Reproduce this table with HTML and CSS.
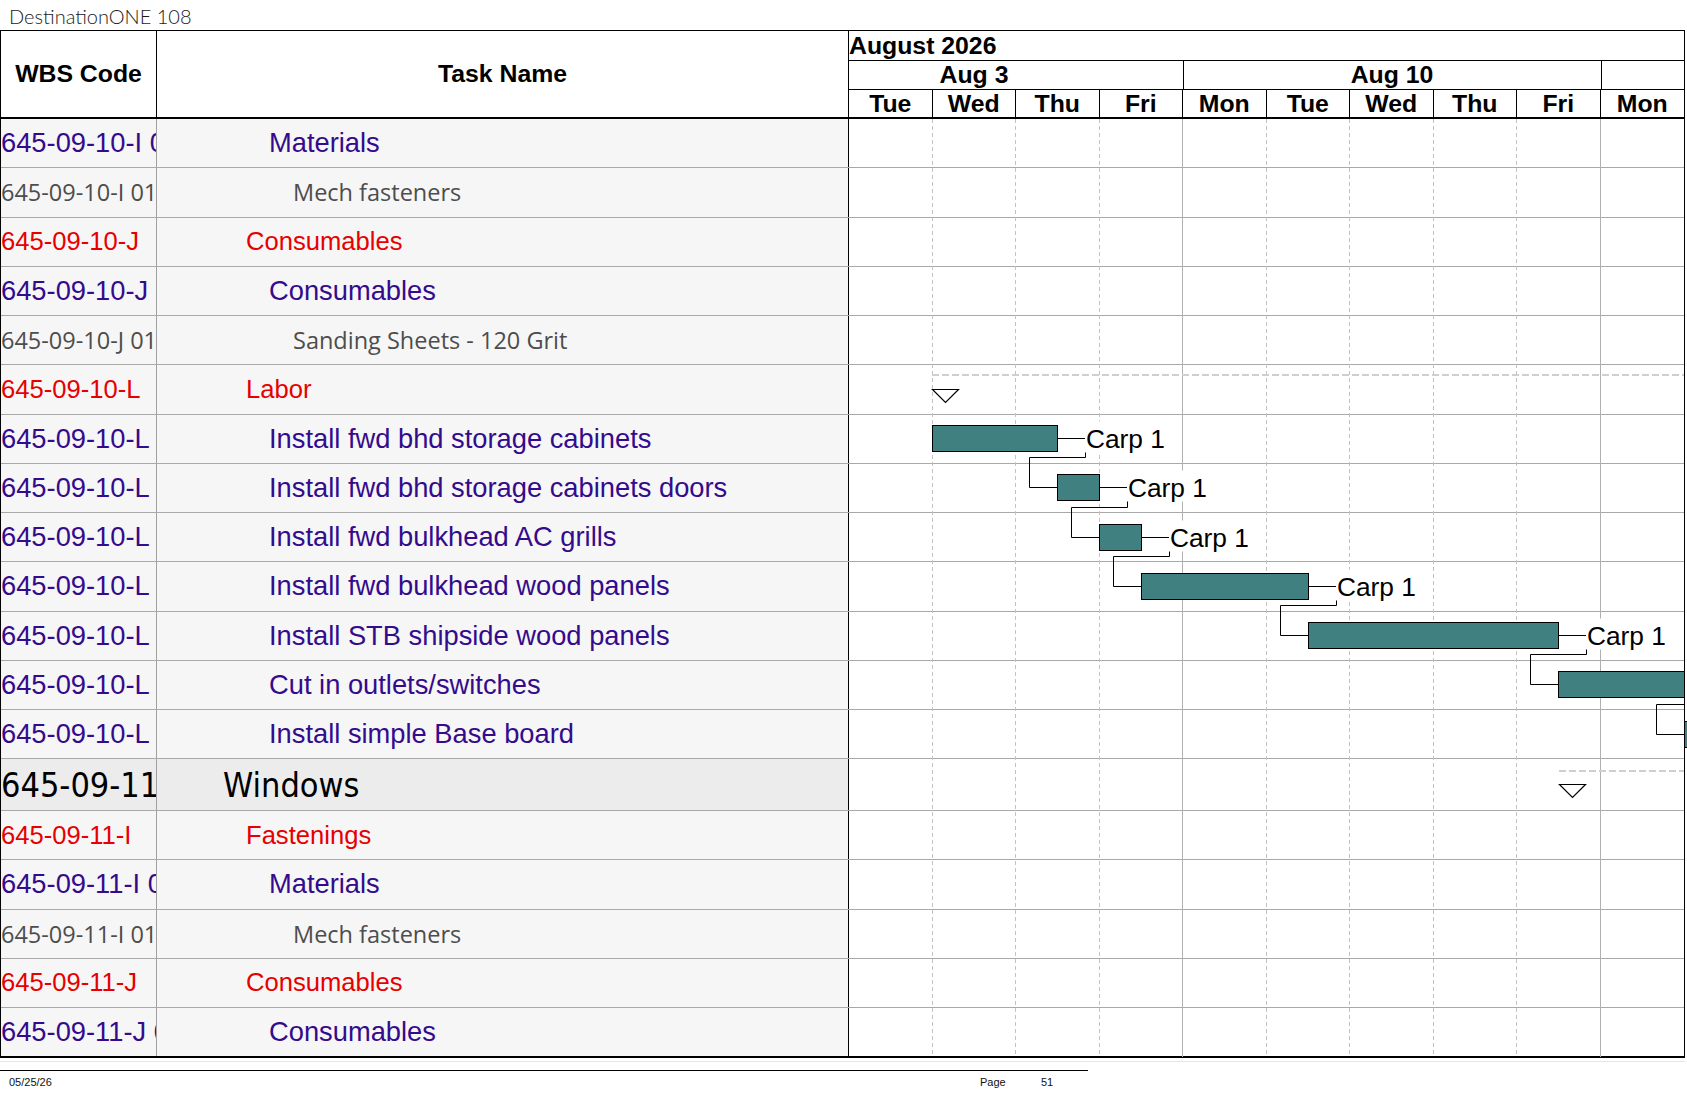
FILE: index.html
```html
<!DOCTYPE html>
<html lang="en">
<head>
<meta charset="utf-8">
<title>DestinationONE 108</title>
<link rel="stylesheet" href="styles.css">
</head>
<body>
<div class="title">DestinationONE 108</div>
<div class="sheet">
  <div class="head">
    <div class="h-wbs">WBS Code</div>
    <div class="h-task">Task Name</div>
    <div class="h-gantt">
      <div class="g-month">August 2026</div>
      <div class="g-weeks">
        <div class="wk wk-first">Aug 3</div>
        <div class="wk">Aug 10</div>
        <div class="wk wk-last"></div>
      </div>
      <div class="g-days">
        <div class="day">Tue</div><div class="day">Wed</div><div class="day">Thu</div><div class="day">Fri</div><div class="day">Mon</div>
        <div class="day">Tue</div><div class="day">Wed</div><div class="day">Thu</div><div class="day">Fri</div><div class="day">Mon</div>
      </div>
    </div>
  </div>
  <div class="body">
    <div class="row"><div class="c-wbs purple">645-09-10-I 01</div><div class="c-task purple l4">Materials</div><div class="c-gantt"></div></div>
    <div class="row"><div class="c-wbs gray">645-09-10-I 01.01</div><div class="c-task gray l5">Mech fasteners</div><div class="c-gantt"></div></div>
    <div class="row"><div class="c-wbs red">645-09-10-J</div><div class="c-task red l3">Consumables</div><div class="c-gantt"></div></div>
    <div class="row"><div class="c-wbs purple">645-09-10-J 01</div><div class="c-task purple l4">Consumables</div><div class="c-gantt"></div></div>
    <div class="row"><div class="c-wbs gray">645-09-10-J 01.01</div><div class="c-task gray l5">Sanding Sheets - 120 Grit</div><div class="c-gantt"></div></div>
    <div class="row"><div class="c-wbs red">645-09-10-L</div><div class="c-task red l3">Labor</div><div class="c-gantt"></div></div>
    <div class="row"><div class="c-wbs purple">645-09-10-L 01</div><div class="c-task purple l4">Install fwd bhd storage cabinets</div><div class="c-gantt"></div></div>
    <div class="row"><div class="c-wbs purple">645-09-10-L 02</div><div class="c-task purple l4">Install fwd bhd storage cabinets doors</div><div class="c-gantt"></div></div>
    <div class="row"><div class="c-wbs purple">645-09-10-L 03</div><div class="c-task purple l4">Install fwd bulkhead AC grills</div><div class="c-gantt"></div></div>
    <div class="row"><div class="c-wbs purple">645-09-10-L 04</div><div class="c-task purple l4">Install fwd bulkhead wood panels</div><div class="c-gantt"></div></div>
    <div class="row"><div class="c-wbs purple">645-09-10-L 05</div><div class="c-task purple l4">Install STB shipside wood panels</div><div class="c-gantt"></div></div>
    <div class="row"><div class="c-wbs purple">645-09-10-L 06</div><div class="c-task purple l4">Cut in outlets/switches</div><div class="c-gantt"></div></div>
    <div class="row"><div class="c-wbs purple">645-09-10-L 07</div><div class="c-task purple l4">Install simple Base board</div><div class="c-gantt"></div></div>
    <div class="row win"><div class="c-wbs big">645-09-11</div><div class="c-task big l2">Windows</div><div class="c-gantt"></div></div>
    <div class="row"><div class="c-wbs red">645-09-11-I</div><div class="c-task red l3">Fastenings</div><div class="c-gantt"></div></div>
    <div class="row"><div class="c-wbs purple">645-09-11-I 01</div><div class="c-task purple l4">Materials</div><div class="c-gantt"></div></div>
    <div class="row"><div class="c-wbs gray">645-09-11-I 01.01</div><div class="c-task gray l5">Mech fasteners</div><div class="c-gantt"></div></div>
    <div class="row"><div class="c-wbs red">645-09-11-J</div><div class="c-task red l3">Consumables</div><div class="c-gantt"></div></div>
    <div class="row last"><div class="c-wbs purple">645-09-11-J 01</div><div class="c-task purple l4">Consumables</div><div class="c-gantt"></div></div>

    <svg class="chart" width="838" height="938" viewBox="0 0 838 938" xmlns="http://www.w3.org/2000/svg">
      <g stroke="#c2c2c2" stroke-width="1" stroke-dasharray="4 3" fill="none">
        <line x1="83.5" y1="0" x2="83.5" y2="938"/>
        <line x1="166.5" y1="0" x2="166.5" y2="938"/>
        <line x1="250.5" y1="0" x2="250.5" y2="938"/>
        <line x1="417.5" y1="0" x2="417.5" y2="938"/>
        <line x1="500.5" y1="0" x2="500.5" y2="938"/>
        <line x1="584.5" y1="0" x2="584.5" y2="938"/>
        <line x1="667.5" y1="0" x2="667.5" y2="938"/>
      </g>
      <g stroke="#b0b0b0" stroke-width="1" fill="none">
        <line x1="333.5" y1="0" x2="333.5" y2="938"/>
        <line x1="751.5" y1="0" x2="751.5" y2="938"/>
      </g>

      <!-- summary: Labor -->
      <line x1="83" y1="256" x2="835" y2="256" stroke="#cfcfcf" stroke-width="2" stroke-dasharray="7 3"/>
      <polygon points="83.5,270.5 109.5,270.5 96.5,283.5" fill="#fff" stroke="#000" stroke-width="1.2"/>
      <!-- summary: Windows -->
      <line x1="710" y1="652" x2="835" y2="652" stroke="#cfcfcf" stroke-width="2" stroke-dasharray="7 3"/>
      <polygon points="710.5,665.5 736.5,665.5 723.5,678.5" fill="#fff" stroke="#000" stroke-width="1.2"/>

      <!-- links -->
      <g stroke="#000" stroke-width="1" fill="none">
        <path d="M208.5 319.5 H236.5 V338.5 H180.5 V368.5 H208.5"/>
        <path d="M250.5 368.5 H278.5 V388.5 H222.5 V418.5 H250.5"/>
        <path d="M292.5 418.5 H320.5 V437.5 H264.5 V467.5 H292.5"/>
        <path d="M459.5 467.5 H487.5 V486.5 H431.5 V516.5 H459.5"/>
        <path d="M709.5 516.5 H737.5 V535.5 H681.5 V565.5 H709.5"/>
        <path d="M835 585.5 H807.5 V615.5 H835.5"/>
      </g>

      <!-- bars -->
      <g fill="#408080" stroke="#000" stroke-width="1">
        <rect x="83.5" y="306.5" width="125" height="26"/>
        <rect x="208.5" y="355.5" width="42" height="26"/>
        <rect x="250.5" y="405.5" width="42" height="26"/>
        <rect x="292.5" y="454.5" width="167" height="26"/>
        <rect x="459.5" y="503.5" width="250" height="26"/>
        <rect x="709.5" y="552.5" width="126" height="26"/>
        <rect x="835.5" y="602.5" width="20" height="26"/>
      </g>

      <!-- resource labels -->
      <g class="labels">
        <rect x="236" y="302.5" width="82" height="31" fill="#fff"/>
        <text x="237" y="328.8">Carp 1</text>
        <rect x="278" y="351.5" width="82" height="31" fill="#fff"/>
        <text x="279" y="377.8">Carp 1</text>
        <rect x="320" y="401.5" width="82" height="31" fill="#fff"/>
        <text x="321" y="427.8">Carp 1</text>
        <rect x="487" y="450.5" width="82" height="31" fill="#fff"/>
        <text x="488" y="476.8">Carp 1</text>
        <rect x="737" y="499.5" width="82" height="31" fill="#fff"/>
        <text x="738" y="525.8">Carp 1</text>
      </g>
    </svg>
  </div>
</div>
<div class="ghost-rule"></div>
<div class="foot-rule"></div>
<div class="foot">
  <span class="foot-date">05/25/26</span>
  <span class="foot-page">Page</span>
  <span class="foot-num">51</span>
</div>
</body>
</html>
```

FILE: styles.css
```css
html, body {
  margin: 0;
  padding: 0;
  overflow: hidden;
  background: #fff;
}

body {
  width: 1687px;
  height: 1097px;
  font-family: "Liberation Sans", Arial, sans-serif;
  color: #000;
}

.title {
  box-sizing: border-box;
  height: 30px;
  padding: 4px 0 0 9px;
  font-family: Lato, "Noto Sans", sans-serif;
  font-weight: 300;
  font-size: 20px;
  line-height: 24px;
  color: #1a1a1a;
  white-space: nowrap;
}

.sheet {
  box-sizing: border-box;
  width: 1685px;
  border-top: 1px solid #000;
  border-left: 1px solid #000;
  border-right: 1px solid #000;
}

/* ---------- header ---------- */
.head {
  box-sizing: border-box;
  display: flex;
  height: 88px;
  border-bottom: 2px solid #000;
  font-weight: bold;
  font-size: 24.8px;
}

.h-wbs,
.h-task {
  display: flex;
  align-items: center;
  justify-content: center;
  border-right: 1px solid #000;
  white-space: nowrap;
}

.h-wbs { flex: 0 0 155px; }
.h-task { flex: 0 0 691px; }

.h-gantt {
  flex: 0 0 835px;
  display: flex;
  flex-direction: column;
  overflow: hidden;
}

.g-month {
  box-sizing: border-box;
  height: 30px;
  line-height: 29px;
  border-bottom: 1px solid #000;
  white-space: nowrap;
}

.g-weeks {
  box-sizing: border-box;
  display: flex;
  height: 29px;
  border-bottom: 1px solid #000;
}

.wk {
  box-sizing: border-box;
  flex: 0 0 418px;
  border-right: 1px solid #000;
  text-align: center;
  line-height: 28px;
  white-space: nowrap;
}

.wk-first { margin-left: -83.5px; }
.wk-last { flex: 1 0 0; border-right: none; }

.g-days {
  display: flex;
  height: 27px;
}

.day {
  box-sizing: border-box;
  flex: 0 0 83.5px;
  border-right: 1px solid #000;
  text-align: center;
  line-height: 27px;
}

.day:last-child { border-right: none; }

/* ---------- body rows ---------- */
.body {
  position: relative;
}

.row {
  box-sizing: border-box;
  display: grid;
  grid-template-columns: 156px 692px 835px;
  height: 49.25px;
  border-bottom: 1px solid #a9a9a9;
}

.row.win { height: 51.75px; }

.row.last {
  height: 50.25px;
  border-bottom: 2px solid #000;
}

.c-wbs,
.c-task {
  display: flex;
  align-items: center;
  overflow: hidden;
  white-space: nowrap;
  background: #f6f6f6;
}

.row.win .c-wbs,
.row.win .c-task { background: #ececec; }

.c-wbs { border-right: 1px solid #a0a0a0; }
.c-task { border-right: 1px solid #000; }
.c-gantt { background: #fff; }

.purple {
  font-family: "Liberation Sans", Arial, sans-serif;
  font-size: 27.3px;
  color: #340b8c;
}

.red {
  font-family: "Liberation Sans", Arial, sans-serif;
  font-size: 25.6px;
  color: #e60000;
}

.gray {
  font-family: "Open Sans", "Noto Sans", sans-serif;
  font-size: 23.5px;
  color: #4d4d4d;
}

.big {
  font-family: "DejaVu Sans Condensed", "DejaVu Sans", sans-serif;
  font-stretch: condensed;
  font-size: 34px;
  color: #000;
}

.l2 { padding-left: 66px; }
.l3 { padding-left: 89px; }
.l4 { padding-left: 112px; }
.l5 { padding-left: 136px; }

/* ---------- chart overlay ---------- */
.chart {
  position: absolute;
  left: 848px;
  top: 0;
  overflow: hidden;
}

.labels text {
  font-family: "Liberation Sans", Arial, sans-serif;
  font-size: 26.3px;
  fill: #000;
}

/* ---------- footer ---------- */
.ghost-rule {
  width: 1685px;
  height: 1px;
  margin-top: 3px;
  background: #e6e6e6;
}

.foot-rule {
  width: 1088px;
  height: 0;
  margin-top: 8px;
  border-top: 1px solid #000;
}

.foot {
  display: grid;
  grid-template-columns: 980px 61px auto;
  width: 1100px;
  margin-top: 5px;
  font-size: 11px;
  line-height: 13px;
  color: #111;
}

.foot-date { padding-left: 9px; }
```
